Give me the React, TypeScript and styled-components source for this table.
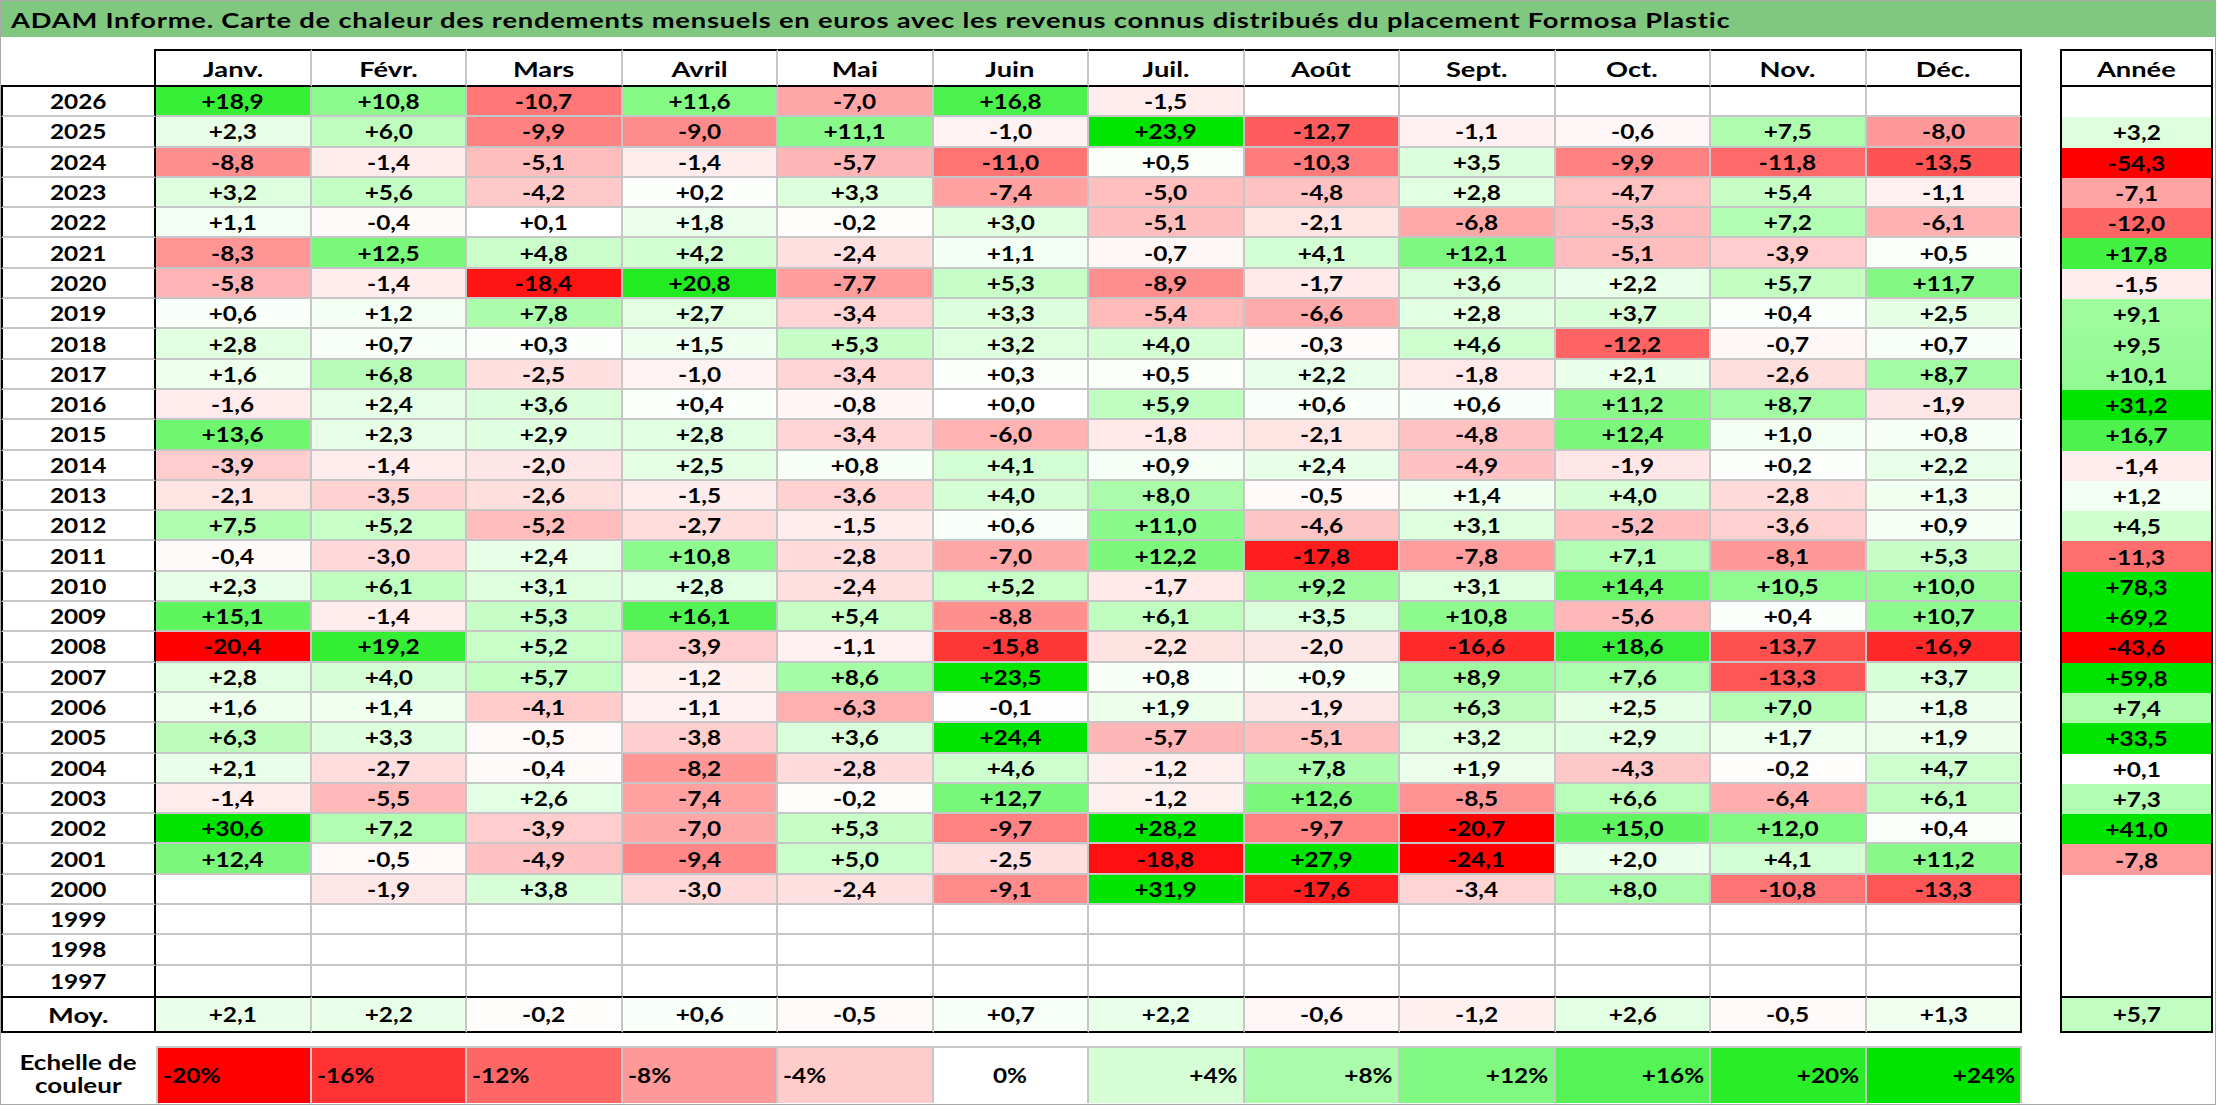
import React from 'react';
import styled, { createGlobalStyle } from 'styled-components';

const GRID = '#c6c6c6';
const INK = '#000';

const MONTHS = ['Janv.', 'Févr.', 'Mars', 'Avril', 'Mai', 'Juin', 'Juil.', 'Août', 'Sept.', 'Oct.', 'Nov.', 'Déc.'];

type Cell = number | null;
type Row = { year: number; months: Cell[]; total: Cell };

const _ = null;
const EMPTY: Cell[] = [_, _, _, _, _, _, _, _, _, _, _, _];

const ROWS: Row[] = [
	{ year: 2026, months: [18.9, 10.8, -10.7, 11.6, -7.0, 16.8, -1.5, _, _, _, _, _], total: _ },
	{ year: 2025, months: [2.3, 6.0, -9.9, -9.0, 11.1, -1.0, 23.9, -12.7, -1.1, -0.6, 7.5, -8.0], total: 3.2 },
	{ year: 2024, months: [-8.8, -1.4, -5.1, -1.4, -5.7, -11.0, 0.5, -10.3, 3.5, -9.9, -11.8, -13.5], total: -54.3 },
	{ year: 2023, months: [3.2, 5.6, -4.2, 0.2, 3.3, -7.4, -5.0, -4.8, 2.8, -4.7, 5.4, -1.1], total: -7.1 },
	{ year: 2022, months: [1.1, -0.4, 0.1, 1.8, -0.2, 3.0, -5.1, -2.1, -6.8, -5.3, 7.2, -6.1], total: -12.0 },
	{ year: 2021, months: [-8.3, 12.5, 4.8, 4.2, -2.4, 1.1, -0.7, 4.1, 12.1, -5.1, -3.9, 0.5], total: 17.8 },
	{ year: 2020, months: [-5.8, -1.4, -18.4, 20.8, -7.7, 5.3, -8.9, -1.7, 3.6, 2.2, 5.7, 11.7], total: -1.5 },
	{ year: 2019, months: [0.6, 1.2, 7.8, 2.7, -3.4, 3.3, -5.4, -6.6, 2.8, 3.7, 0.4, 2.5], total: 9.1 },
	{ year: 2018, months: [2.8, 0.7, 0.3, 1.5, 5.3, 3.2, 4.0, -0.3, 4.6, -12.2, -0.7, 0.7], total: 9.5 },
	{ year: 2017, months: [1.6, 6.8, -2.5, -1.0, -3.4, 0.3, 0.5, 2.2, -1.8, 2.1, -2.6, 8.7], total: 10.1 },
	{ year: 2016, months: [-1.6, 2.4, 3.6, 0.4, -0.8, 0.0, 5.9, 0.6, 0.6, 11.2, 8.7, -1.9], total: 31.2 },
	{ year: 2015, months: [13.6, 2.3, 2.9, 2.8, -3.4, -6.0, -1.8, -2.1, -4.8, 12.4, 1.0, 0.8], total: 16.7 },
	{ year: 2014, months: [-3.9, -1.4, -2.0, 2.5, 0.8, 4.1, 0.9, 2.4, -4.9, -1.9, 0.2, 2.2], total: -1.4 },
	{ year: 2013, months: [-2.1, -3.5, -2.6, -1.5, -3.6, 4.0, 8.0, -0.5, 1.4, 4.0, -2.8, 1.3], total: 1.2 },
	{ year: 2012, months: [7.5, 5.2, -5.2, -2.7, -1.5, 0.6, 11.0, -4.6, 3.1, -5.2, -3.6, 0.9], total: 4.5 },
	{ year: 2011, months: [-0.4, -3.0, 2.4, 10.8, -2.8, -7.0, 12.2, -17.8, -7.8, 7.1, -8.1, 5.3], total: -11.3 },
	{ year: 2010, months: [2.3, 6.1, 3.1, 2.8, -2.4, 5.2, -1.7, 9.2, 3.1, 14.4, 10.5, 10.0], total: 78.3 },
	{ year: 2009, months: [15.1, -1.4, 5.3, 16.1, 5.4, -8.8, 6.1, 3.5, 10.8, -5.6, 0.4, 10.7], total: 69.2 },
	{ year: 2008, months: [-20.4, 19.2, 5.2, -3.9, -1.1, -15.8, -2.2, -2.0, -16.6, 18.6, -13.7, -16.9], total: -43.6 },
	{ year: 2007, months: [2.8, 4.0, 5.7, -1.2, 8.6, 23.5, 0.8, 0.9, 8.9, 7.6, -13.3, 3.7], total: 59.8 },
	{ year: 2006, months: [1.6, 1.4, -4.1, -1.1, -6.3, -0.1, 1.9, -1.9, 6.3, 2.5, 7.0, 1.8], total: 7.4 },
	{ year: 2005, months: [6.3, 3.3, -0.5, -3.8, 3.6, 24.4, -5.7, -5.1, 3.2, 2.9, 1.7, 1.9], total: 33.5 },
	{ year: 2004, months: [2.1, -2.7, -0.4, -8.2, -2.8, 4.6, -1.2, 7.8, 1.9, -4.3, -0.2, 4.7], total: 0.1 },
	{ year: 2003, months: [-1.4, -5.5, 2.6, -7.4, -0.2, 12.7, -1.2, 12.6, -8.5, 6.6, -6.4, 6.1], total: 7.3 },
	{ year: 2002, months: [30.6, 7.2, -3.9, -7.0, 5.3, -9.7, 28.2, -9.7, -20.7, 15.0, 12.0, 0.4], total: 41.0 },
	{ year: 2001, months: [12.4, -0.5, -4.9, -9.4, 5.0, -2.5, -18.8, 27.9, -24.1, 2.0, 4.1, 11.2], total: -7.8 },
	{ year: 2000, months: [_, -1.9, 3.8, -3.0, -2.4, -9.1, 31.9, -17.6, -3.4, 8.0, -10.8, -13.3], total: _ },
	{ year: 1999, months: EMPTY, total: _ },
	{ year: 1998, months: EMPTY, total: _ },
	{ year: 1997, months: EMPTY, total: _ },
];

const AVERAGE: Row = { year: 0, months: [2.1, 2.2, -0.2, 0.6, -0.5, 0.7, 2.2, -0.6, -1.2, 2.6, -0.5, 1.3], total: 5.7 };

const SCALE = [-20, -16, -12, -8, -4, 0, 4, 8, 12, 16, 20, 24];

// red saturates at -20 %, green at +24 %
const heat = (v: Cell) => {
	if (v === null) return '#ffffff';
	if (v < 0) {
		const c = Math.round(255 * (1 - Math.min(1, -v / 20)));
		return `rgb(255,${c},${c})`;
	}
	const t = Math.min(1, v / 24);
	const c = Math.round(255 * (1 - t));
	const g = Math.round(255 - 26 * t * t);
	return `rgb(${c},${g},${c})`;
};

const fmt = (v: Cell) => (v === null ? '' : (v < 0 ? '-' : '+') + Math.abs(v).toFixed(1).replace('.', ','));

const GlobalStyle = createGlobalStyle`
	html, body {
		margin: 0;
		padding: 0;
		background: #fff;
	}
	body {
		font-family: Lato, 'Liberation Sans', sans-serif;
		color: #000;
	}
`;

const Frame = styled.div`
	box-sizing: border-box;
	width: 2216px;
	height: 1105px;
	border: 1px solid #a8a8a8;
	overflow: hidden;
`;

const TitleBar = styled.div`
	height: 36px;
	background: #80c880;
	display: flex;
	align-items: center;
	padding-left: 10px;
	font-size: 21px;
	font-weight: 700;
	letter-spacing: 0.6px;
`;

const Sheet = styled.div`
	padding-top: 12px;
`;

const Tables = styled.div`
	display: flex;
	align-items: flex-start;
	gap: 38px;
`;

const MainGrid = styled.div`
	display: grid;
	grid-template-columns: 155px repeat(12, 155.5px);
	grid-template-rows: 38px repeat(30, 30.3px) 37px;
`;

const YearGrid = styled.div`
	display: grid;
	grid-template-columns: 153px;
	grid-template-rows: 38px repeat(30, 30.3px) 37px;
`;

// the sheet was captured with a horizontal stretch: digits need less, words more
const Txt = styled.span<{ $origin?: string; $wide?: boolean }>`
	display: inline-block;
	white-space: nowrap;
	transform: scaleX(${(p) => (p.$wide ? 1.3 : 1.22)});
	transform-origin: ${(p) => p.$origin ?? 'center'};
`;

const CellBase = styled.div`
	box-sizing: border-box;
	display: flex;
	align-items: center;
	justify-content: center;
	font-size: 20px;
	font-weight: 700;
	line-height: 1;
`;

const Corner = styled(CellBase)`
	border-right: 2px solid ${INK};
	border-bottom: 2px solid ${INK};
`;

const Head = styled(CellBase)<{ $last?: boolean }>`
	font-size: 21px;
	border-top: 2px solid ${INK};
	border-bottom: 2px solid ${INK};
	border-right: 2px solid ${(p) => (p.$last ? INK : GRID)};
`;

const YearLabel = styled(CellBase)<{ $end?: boolean }>`
	border-left: 2px solid ${INK};
	border-right: 2px solid ${INK};
	border-bottom: ${(p) => (p.$end ? 'none' : `2px solid ${GRID}`)};
`;

const Value = styled(CellBase)<{ $bg: string; $last?: boolean; $end?: boolean }>`
	background: ${(p) => p.$bg};
	border-right: 2px solid ${(p) => (p.$last ? INK : GRID)};
	border-bottom: ${(p) => (p.$end ? 'none' : `2px solid ${GRID}`)};
`;

const FootLabel = styled(CellBase)`
	font-size: 21px;
	border: 2px solid ${INK};
`;

const FootValue = styled(CellBase)<{ $bg: string; $last?: boolean }>`
	background: ${(p) => p.$bg};
	border-top: 2px solid ${INK};
	border-bottom: 2px solid ${INK};
	border-right: 2px solid ${(p) => (p.$last ? INK : GRID)};
`;

const TotalHead = styled(CellBase)`
	font-size: 21px;
	border: 2px solid ${INK};
`;

const TotalValue = styled(CellBase)<{ $bg: string }>`
	background: ${(p) => p.$bg};
	border-left: 2px solid ${INK};
	border-right: 2px solid ${INK};
`;

const TotalFoot = styled(CellBase)<{ $bg: string }>`
	background: ${(p) => p.$bg};
	border: 2px solid ${INK};
`;

const Legend = styled.div`
	display: grid;
	grid-template-columns: 155px repeat(12, 155.5px);
	height: 57px;
	margin-top: 13px;
`;

const LegendLabel = styled(CellBase)`
	flex-direction: column;
	line-height: 23px;
`;

const Swatch = styled(CellBase)<{ $bg: string; $align: 'flex-start' | 'center' | 'flex-end' }>`
	background: ${(p) => p.$bg};
	justify-content: ${(p) => p.$align};
	padding: 0 5px;
	border-top: 2px solid ${GRID};
	border-right: 2px solid ${GRID};
	&:nth-child(2) {
		border-left: 2px solid ${GRID};
	}
`;

const App: React.FC = () => {
	return (
		<>
			<GlobalStyle />
			<Frame>
				<TitleBar>
					<Txt $origin="left" $wide>
						ADAM Informe. Carte de chaleur des rendements mensuels en euros avec les revenus connus distribués du placement Formosa Plastic
					</Txt>
				</TitleBar>

				<Sheet>
					<Tables>
						<MainGrid>
							<Corner />
							{MONTHS.map((m, i) => (
								<Head key={m} $last={i === 11}>
									<Txt $wide>{m}</Txt>
								</Head>
							))}

							{ROWS.map((row, r) => {
								const end = r === ROWS.length - 1;
								return (
									<React.Fragment key={row.year}>
										<YearLabel $end={end}>
											<Txt>{row.year}</Txt>
										</YearLabel>
										{row.months.map((v, i) => (
											<Value key={i} $bg={heat(v)} $last={i === 11} $end={end}>
												<Txt>{fmt(v)}</Txt>
											</Value>
										))}
									</React.Fragment>
								);
							})}

							<FootLabel>
								<Txt $wide>Moy.</Txt>
							</FootLabel>
							{AVERAGE.months.map((v, i) => (
								<FootValue key={i} $bg={heat(v)} $last={i === 11}>
									<Txt>{fmt(v)}</Txt>
								</FootValue>
							))}
						</MainGrid>

						<YearGrid>
							<TotalHead>
								<Txt $wide>Année</Txt>
							</TotalHead>
							{ROWS.map((row) => (
								<TotalValue key={row.year} $bg={heat(row.total)}>
									<Txt>{fmt(row.total)}</Txt>
								</TotalValue>
							))}
							<TotalFoot $bg={heat(AVERAGE.total)}>
								<Txt>{fmt(AVERAGE.total)}</Txt>
							</TotalFoot>
						</YearGrid>
					</Tables>

					<Legend>
						<LegendLabel>
							<Txt $wide>Echelle de</Txt>
							<Txt $wide>couleur</Txt>
						</LegendLabel>
						{SCALE.map((s) => {
							const align = s < 0 ? 'flex-start' : s === 0 ? 'center' : 'flex-end';
							const origin = s < 0 ? 'left' : s === 0 ? 'center' : 'right';
							return (
								<Swatch key={s} $bg={heat(s)} $align={align}>
									<Txt $origin={origin}>{(s > 0 ? '+' : '') + s + '%'}</Txt>
								</Swatch>
							);
						})}
					</Legend>
				</Sheet>
			</Frame>
		</>
	);
};

export default App;
